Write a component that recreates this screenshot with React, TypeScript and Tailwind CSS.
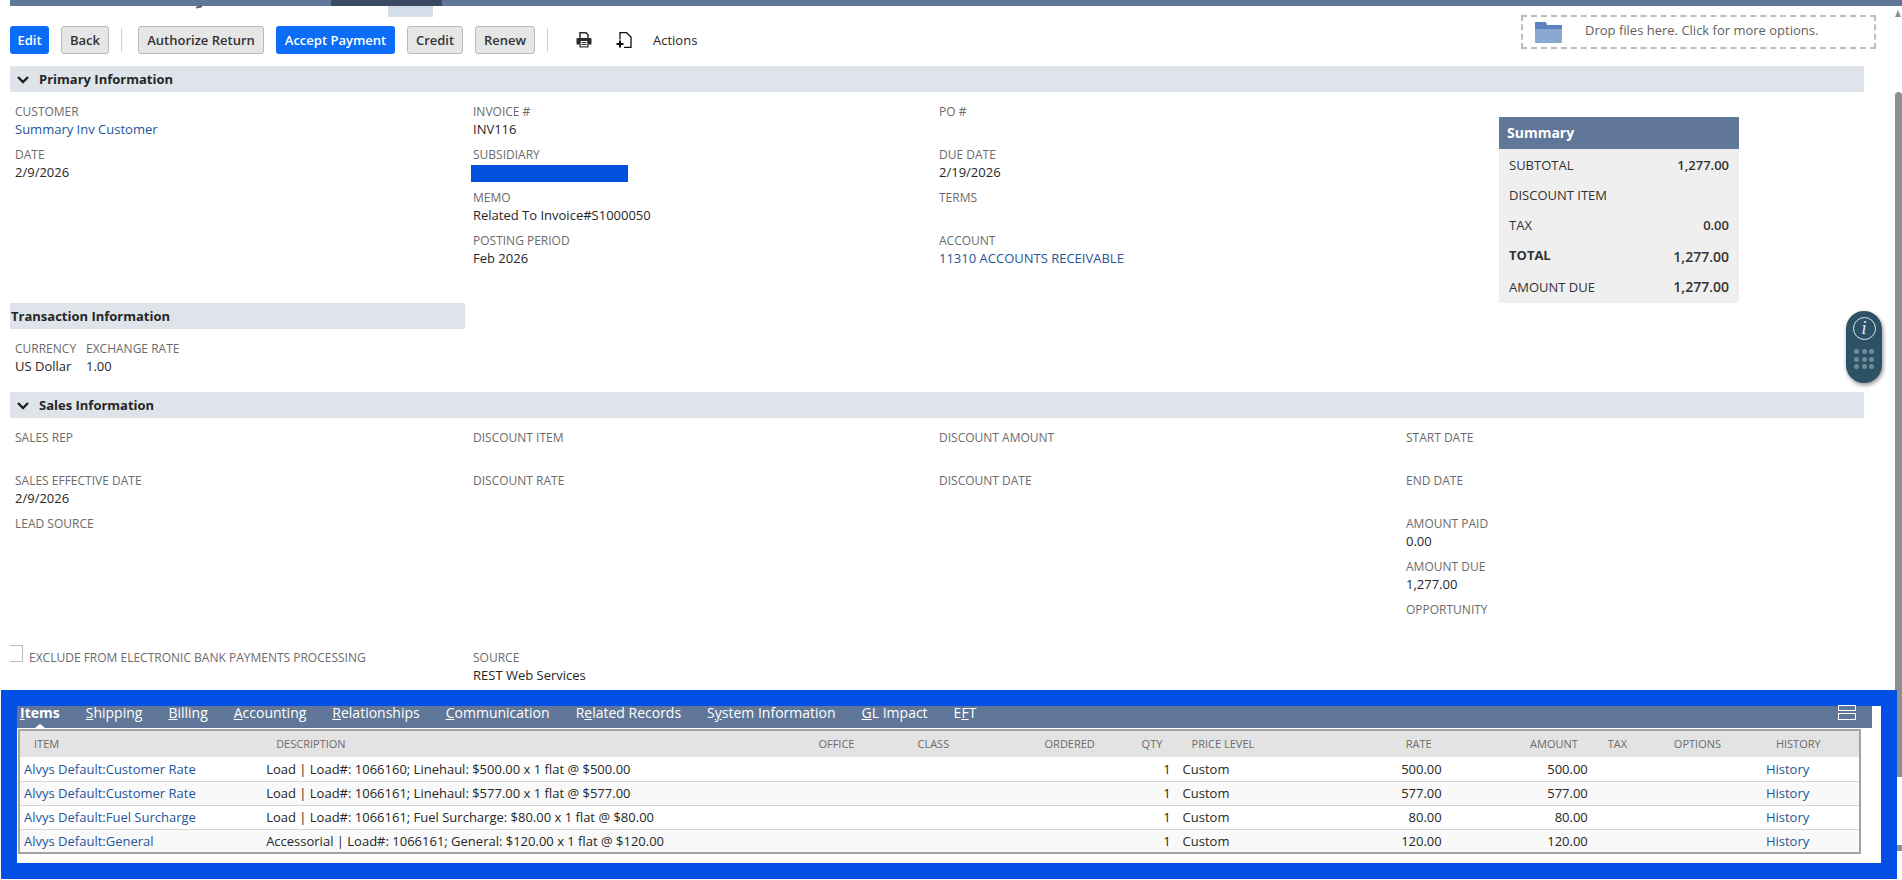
import React from "react";

const Field = ({ label, value, link }: { label: string; value?: string; link?: boolean }) => (
  <div className="h-[43px] leading-[18px] whitespace-nowrap">
    <div className="h-[18px] leading-[20px] text-[12px] text-[#6b6b6b]">{label}</div>
    {value && <div className={"text-[13px] " + (link ? "text-[#255599]" : "text-[#262626]")}>{value}</div>}
  </div>
);

const Btn = ({ children, primary, w }: { children: React.ReactNode; primary?: boolean; w: string }) => (
  <div
    className={
      "h-[28px] pt-[1px] rounded-[3px] flex items-center justify-center text-[13px] font-semibold whitespace-nowrap " +
      w +
      " " +
      (primary ? "bg-[#0b6cf7] text-white" : "bg-[#e6e6e6] border border-[#b9b9b9] text-[#333333]")
    }
  >
    {children}
  </div>
);

const Sep = () => <div className="w-px h-[24px] bg-[#cfcfcf]" />;

const Chevron = () => (
  <svg width="12" height="10" viewBox="0 0 12 10" className="ml-[7px] mr-[10px] shrink-0">
    <path d="M1 2 L6 7 L11 2" fill="none" stroke="#1f1f1f" strokeWidth="2.4" />
  </svg>
);

const SectionBar = ({ title }: { title: string }) => (
  <div className="ml-[10px] w-[1854px] h-[26px] pt-[1px] bg-[#dfe4eb] flex items-center text-[13px] font-bold text-[#262626]">
    <Chevron />
    {title}
  </div>
);

const Tab = ({ pre, u, post, active }: { pre?: string; u: string; post: string; active?: boolean }) => (
  <span className={"text-[14px] leading-[13px] text-white whitespace-nowrap " + (active ? "font-bold" : "")}>
    {pre}
    <span className="underline">{u}</span>
    {post}
  </span>
);

const rows = [
  ["Alvys Default:Customer Rate", "Load | Load#: 1066160; Linehaul: $500.00 x 1 flat @ $500.00", "500.00"],
  ["Alvys Default:Customer Rate", "Load | Load#: 1066161; Linehaul: $577.00 x 1 flat @ $577.00", "577.00"],
  ["Alvys Default:Fuel Surcharge", "Load | Load#: 1066161; Fuel Surcharge: $80.00 x 1 flat @ $80.00", "80.00"],
  ["Alvys Default:General", "Accessorial | Load#: 1066161; General: $120.00 x 1 flat @ $120.00", "120.00"],
];

const SummaryRow = ({
  label,
  value,
  h,
  bold,
  big,
  labelCls = "",
  valueCls = "",
}: {
  label: string;
  value?: string;
  h: string;
  bold?: boolean;
  big?: boolean;
  labelCls?: string;
  valueCls?: string;
}) => (
  <div className={"flex items-center justify-between pl-[10px] pr-[10px] text-[#333333] text-[13px] " + h}>
    <span className={(bold ? "font-bold " : "") + labelCls}>{label}</span>
    {value && <span className={(big ? "text-[14px] font-semibold " : "font-semibold ") + valueCls}>{value}</span>}
  </div>
);

export default function App() {
  return (
    <div className="relative w-[1902px] h-[880px] overflow-hidden bg-white font-['Open_Sans',sans-serif]">
      {/* top strip */}
      <div className="ml-[10px] h-[6px] bg-[#607799] flex">
        <div className="ml-[321px] w-[111px] bg-[#3a4a63]" />
      </div>

      {/* header */}
      <div className="flex justify-between h-[60px]">
        <div>
          <div className="h-[11px] flex items-start">
            <div className="ml-[196px] w-[6px] h-[2px] bg-[#555555] -rotate-12" />
            <div className="ml-[186px] w-[45px] h-[11px] bg-[#d5dfeb]" />
          </div>
          <div className="mt-[9px] ml-[10px] flex items-center">
            <Btn primary w="w-[39px]">Edit</Btn>
            <div className="ml-[12px]"><Btn w="w-[48px]">Back</Btn></div>
            <div className="ml-[12px]"><Sep /></div>
            <div className="ml-[16px]"><Btn w="w-[126px]">Authorize Return</Btn></div>
            <div className="ml-[12px]"><Btn primary w="w-[119px]">Accept Payment</Btn></div>
            <div className="ml-[12px]"><Btn w="w-[56px]">Credit</Btn></div>
            <div className="ml-[12px]"><Btn w="w-[60px]">Renew</Btn></div>
            <div className="ml-[12px]"><Sep /></div>
            <svg width="16" height="16" viewBox="0 0 16 16" className="ml-[28px]">
              <path d="M4 6 V0.8 H10 L12 2.8 V6" fill="none" stroke="#2b2b2b" strokeWidth="1.5" />
              <path d="M1.5 6 H14.5 A1 1 0 0 1 15.5 7 V12.5 H12.5 V15.5 H3.5 V12.5 H0.5 V7 A1 1 0 0 1 1.5 6Z" fill="#2b2b2b" />
              <rect x="4.7" y="9" width="6.6" height="5.4" fill="#ffffff" />
              <path d="M5.5 10.5 H10.5 M5.5 12.5 H10.5" stroke="#2b2b2b" strokeWidth="1" />
            </svg>
            <svg width="16" height="16" viewBox="0 0 16 16" className="ml-[24px]">
              <path d="M4 7.5 V0.7 H10.5 L15 5 V15.3 H8" fill="none" stroke="#111111" strokeWidth="1.3" />
              <path d="M0.5 12 H7.5 M4 8.5 V15.5" stroke="#111111" strokeWidth="2" />
            </svg>
            <span className="ml-[21px] pt-[1px] text-[13px] font-medium text-[#262626]">Actions</span>
          </div>
        </div>
        <div className="mt-[9px] mr-[26px] w-[355px] h-[34px] border-2 border-dashed border-[#bdbdbd] flex items-center">
          <svg width="27" height="21" viewBox="0 0 27 21" className="ml-[12px]">
            <path d="M0 1 A1 1 0 0 1 1 0 H11 L12 3 H27 V8 H0Z" fill="#5c82c1" />
            <path d="M0 7 H27 V20 A1 1 0 0 1 26 21 H1 A1 1 0 0 1 0 20Z" fill="#8ba7d4" />
          </svg>
          <span className="ml-[23px] pb-[2px] text-[13px] text-[#5f5f5f] whitespace-nowrap">Drop files here. Click for more options.</span>
        </div>
      </div>

      {/* primary information */}
      <SectionBar title="Primary Information" />
      <div className="grid grid-cols-[458px_466px_467px_1fr] pl-[15px] pt-[10px] h-[211px]">
        <div>
          <Field label="CUSTOMER" value="Summary Inv Customer" link />
          <Field label="DATE" value="2/9/2026" />
        </div>
        <div>
          <Field label="INVOICE #" value="INV116" />
          <div className="h-[43px]">
            <div className="h-[18px] leading-[20px] text-[12px] text-[#6b6b6b]">SUBSIDIARY</div>
            <div className="-ml-[2px] mt-[2px] w-[157px] h-[17px] bg-[#0250e0]" />
          </div>
          <Field label="MEMO" value="Related To Invoice#S1000050" />
          <Field label="POSTING PERIOD" value="Feb 2026" />
        </div>
        <div>
          <Field label="PO #" />
          <Field label="DUE DATE" value="2/19/2026" />
          <Field label="TERMS" />
          <Field label="ACCOUNT" value="11310 ACCOUNTS RECEIVABLE" link />
        </div>
        <div className="pl-[93px] pt-[15px]">
          <div className="w-[240px] h-[186px] bg-[#efefef]">
            <div className="h-[32px] pb-[2px] bg-[#607799] flex items-center pl-[8px] text-[14px] font-bold text-white">Summary</div>
            <div className="pt-[2px]">
              <SummaryRow label="SUBTOTAL" value="1,277.00" h="h-[30px]" />
              <SummaryRow label="DISCOUNT ITEM" h="h-[29px]" />
              <SummaryRow label="TAX" value="0.00" h="h-[31px]" />
              <SummaryRow label="TOTAL" value="1,277.00" h="h-[30px]" bold big />
              <SummaryRow label="AMOUNT DUE" value="1,277.00" h="h-[32px]" big labelCls="mt-[1px]" valueCls="-mt-[1px]" />
            </div>
          </div>
        </div>
      </div>

      {/* transaction information */}
      <div className="ml-[10px] w-[455px] h-[26px] pt-[1px] bg-[#dfe4eb] flex items-center pl-px text-[13px] font-bold text-[#262626]">
        Transaction Information
      </div>
      <div className="h-[63px] pt-[10px] pl-[15px] flex">
        <div className="w-[71px]"><Field label="CURRENCY" value="US Dollar" /></div>
        <Field label="EXCHANGE RATE" value="1.00" />
      </div>

      {/* sales information */}
      <SectionBar title="Sales Information" />
      <div className="grid grid-cols-[458px_466px_467px_1fr] pl-[15px] pt-[10px] h-[230px]">
        <div>
          <Field label="SALES REP" />
          <Field label="SALES EFFECTIVE DATE" value="2/9/2026" />
          <Field label="LEAD SOURCE" />
        </div>
        <div>
          <Field label="DISCOUNT ITEM" />
          <Field label="DISCOUNT RATE" />
        </div>
        <div>
          <Field label="DISCOUNT AMOUNT" />
          <Field label="DISCOUNT DATE" />
        </div>
        <div>
          <Field label="START DATE" />
          <Field label="END DATE" />
          <Field label="AMOUNT PAID" value="0.00" />
          <Field label="AMOUNT DUE" value="1,277.00" />
          <Field label="OPPORTUNITY" />
        </div>
      </div>
      <div className="grid grid-cols-[458px_1fr] pl-[15px] h-[42px]">
        <div className="flex items-start">
          <div className="-ml-[5px] -mt-[3px] w-[13px] h-[17px] border-t border-r border-b border-[#bcbcbc] shrink-0" />
          <span className="ml-[6px] h-[18px] text-[12px] leading-[20px] text-[#6b6b6b] whitespace-nowrap">
            EXCLUDE FROM ELECTRONIC BANK PAYMENTS PROCESSING
          </span>
        </div>
        <Field label="SOURCE" value="REST Web Services" />
      </div>

      {/* blue highlighted subtabs */}
      <div className="relative z-10 ml-[1px] w-[1896px] h-[189px] bg-[#0250e6] px-[16px] py-[16px]">
        <div className="w-[1864px] h-[157px] bg-white">
          <div className="relative w-[1855px] h-[22px] bg-[#607799] flex items-start gap-[26px] pl-[3px]">
            <Tab u="I" post="tems" active />
            <Tab u="S" post="hipping" />
            <Tab u="B" post="illing" />
            <Tab u="A" post="ccounting" />
            <Tab u="R" post="elationships" />
            <Tab u="C" post="ommunication" />
            <Tab pre="R" u="e" post="lated Records" />
            <Tab pre="S" u="y" post="stem Information" />
            <Tab u="G" post="L Impact" />
            <Tab pre="E" u="F" post="T" />
            <div className="absolute left-[18px] bottom-0 w-0 h-0 border-l-[5px] border-r-[5px] border-b-[4px] border-l-transparent border-r-transparent border-b-white" />
            <div className="absolute left-[1821px] top-0 w-[18px] flex flex-col gap-[2px]">
              <div className="h-[6px] border border-white bg-[#607799] -mt-[1px]" />
              <div className="h-[7px] border border-white bg-[#607799]" />
            </div>
          </div>
          <table className="mt-[1px] ml-[1px] w-[1843px] table-fixed border-collapse border-2 border-[#a3a3a3] text-[13px]">
            <colgroup>
              <col className="w-[243px]" />
              <col className="w-[548px]" />
              <col className="w-[100px]" />
              <col className="w-[126px]" />
              <col className="w-[94px]" />
              <col className="w-[45px]" />
              <col className="w-[175px]" />
              <col className="w-[96px]" />
              <col className="w-[146px]" />
              <col className="w-[72px]" />
              <col className="w-[96px]" />
              <col className="w-[99px]" />
            </colgroup>
            <thead>
              <tr className="h-[27px] bg-[#e3e3e3] text-[11px] text-[#6b6b6b] font-normal">
                <th className="font-normal text-left pl-[14px]">ITEM</th>
                <th className="font-normal text-left pl-[14px]">DESCRIPTION</th>
                <th className="font-normal text-left pl-[8px]">OFFICE</th>
                <th className="font-normal text-left pl-[7px]">CLASS</th>
                <th className="font-normal text-left pl-[8px]">ORDERED</th>
                <th className="font-normal text-left pl-[11px]">QTY</th>
                <th className="font-normal text-left pl-[16px]">PRICE LEVEL</th>
                <th className="font-normal text-right pr-[15px]">RATE</th>
                <th className="font-normal text-right pr-[15px]">AMOUNT</th>
                <th className="font-normal text-left pl-[15px]">TAX</th>
                <th className="font-normal text-left pl-[9px]">OPTIONS</th>
                <th className="font-normal text-left pl-[15px]">HISTORY</th>
              </tr>
            </thead>
            <tbody>
              {rows.map((r, i) => (
                <tr key={i} className={"h-[24px] border-b border-[#d6d6d6] text-[#262626] " + (i % 2 ? "bg-[#f9f9f9]" : "bg-white")}>
                  <td className="pt-[1px] pl-[4px] text-[#255599] whitespace-nowrap">{r[0]}</td>
                  <td className="pt-[1px] pl-[4px] whitespace-nowrap">{r[1]}</td>
                  <td />
                  <td />
                  <td />
                  <td className="pt-[1px] text-right pr-[5px]">1</td>
                  <td className="pt-[1px] pl-[7px]">Custom</td>
                  <td className="pt-[1px] text-right pr-[5px]">{r[2]}</td>
                  <td className="pt-[1px] text-right pr-[5px]">{r[2]}</td>
                  <td />
                  <td />
                  <td className="pt-[1px] pl-[5px] text-[#255599]">History</td>
                </tr>
              ))}
            </tbody>
          </table>
        </div>
      </div>

      {/* info widget */}
      <div className="absolute left-[1846px] top-[311px] w-[36px] h-[72px] rounded-[18px] bg-[#2d5265] shadow-[1px_2px_4px_rgba(0,0,0,0.45)] flex flex-col items-center">
        <div className="mt-[6px] w-[23px] h-[23px] rounded-full border-[1.5px] border-[#dfe8ec] flex items-center justify-center text-[#e8eef1] text-[18px] italic font-['Liberation_Serif',serif]">
          i
        </div>
        <div className="mt-[9px] grid grid-cols-3 gap-[2.5px]">
          {Array.from({ length: 9 }).map((_, i) => (
            <div key={i} className="w-[5px] h-[5px] rounded-full bg-[#6f8c9b]" />
          ))}
        </div>
      </div>

      {/* scrollbar */}
      <div className="absolute left-[1895px] top-[10px] w-0 h-0 border-l-[3.5px] border-r-[3.5px] border-b-[7px] border-l-transparent border-r-transparent border-b-[#8f8f8f]" />
      <div className="absolute left-[1895px] top-[92px] w-[7px] h-[685px] bg-[#8f8f8f] rounded-t-[4px]" />
      <div className="absolute z-20 left-[1897px] top-[845px] w-[5px] h-[6px] bg-[#8f8f8f]" />
    </div>
  );
}
